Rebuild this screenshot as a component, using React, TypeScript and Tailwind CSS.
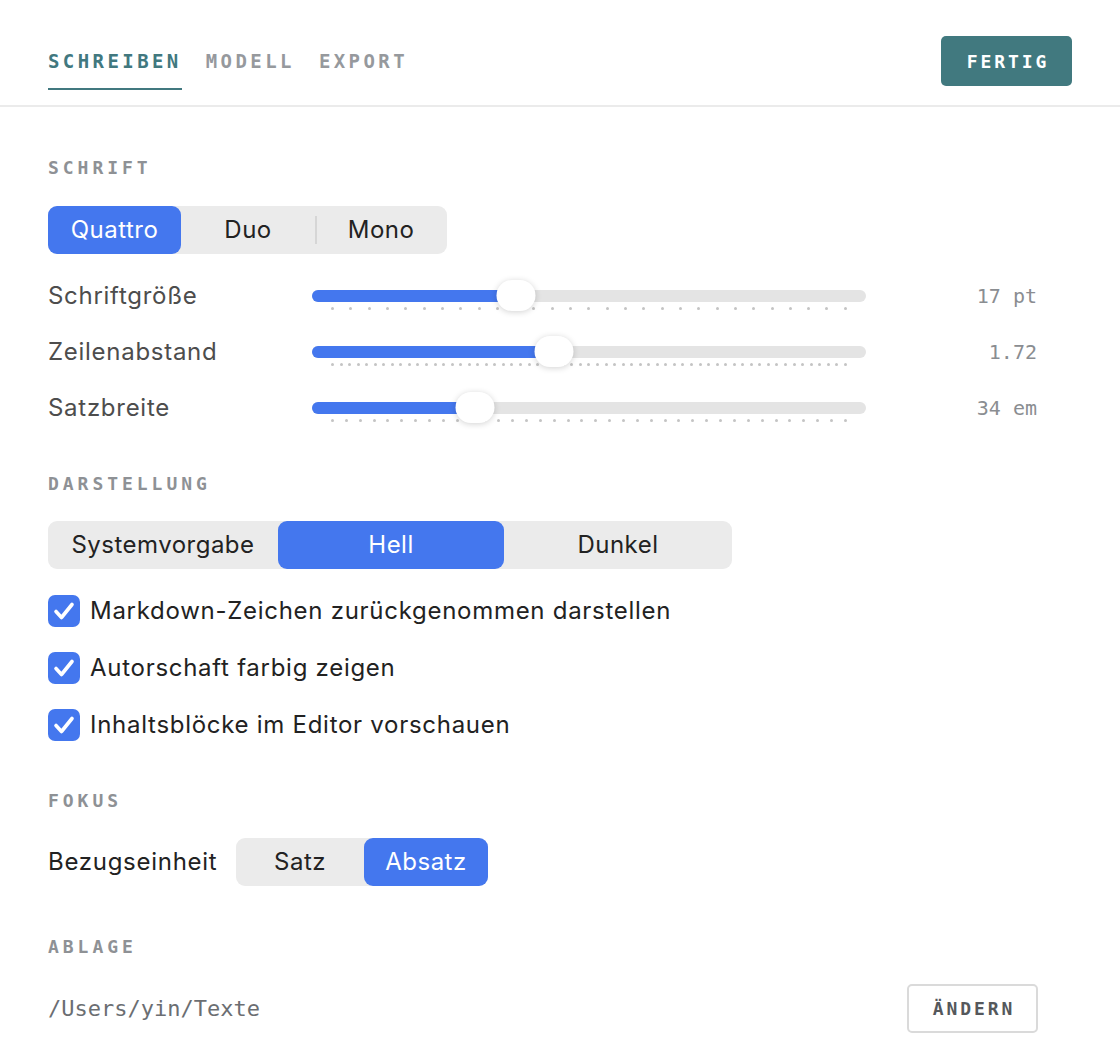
import { useState } from "react";

const mono = "font-['DejaVu_Sans_Mono',monospace]";

function SectionLabel({ children }: { children: string }) {
  return (
    <div className={`${mono} h-[20px] leading-[20px] text-[18px] font-bold tracking-[0.22em] text-[#8e9195]`}>
      {children}
    </div>
  );
}

type SegProps = {
  items: string[];
  active: number;
  widths: number[];
  onPick: (i: number) => void;
};

function Segmented({ items, active, widths, onPick }: SegProps) {
  return (
    <div className="flex h-[48px] rounded-[9px] bg-[#ebebeb]">
      {items.map((label, i) => {
        const on = i === active;
        const showDivider = i > 0 && i !== active && i - 1 !== active;
        return (
          <div key={label} className="relative flex" style={{ width: widths[i] }}>
            {showDivider && (
              <div className="absolute left-0 top-[10px] h-[28px] w-[2px] bg-[#d6d6d6]" />
            )}
            <button
              onClick={() => onPick(i)}
              className={
                on
                  ? "flex-1 rounded-[9px] bg-[#4477ee] text-[24px] tracking-[0.02em] text-white"
                  : "flex-1 rounded-[9px] text-[24px] tracking-[0.02em] text-[#222]"
              }
            >
              {label}
            </button>
          </div>
        );
      })}
    </div>
  );
}

function Slider({
  label,
  value,
  pct,
  dots,
}: {
  label: string;
  value: string;
  pct: number;
  dots: number;
}) {
  return (
    <div className="flex h-[56px] items-center">
      <div className="w-[264px] text-[24px] tracking-[0.03em] text-[#4d4d4d]">{label}</div>
      <div className="w-[554px] pt-[8px]">
        <div className="relative h-[12px] rounded-full bg-[#e4e4e4]">
          <div className="h-full rounded-full bg-[#4477ee]" style={{ width: `${pct}%` }} />
          <div
            className="absolute top-[-10px] z-10 h-[31px] w-[39px] -translate-x-1/2 rounded-full bg-white shadow-[0_1px_6px_rgba(0,0,0,0.18)]"
            style={{ left: `${pct}%` }}
          />
        </div>
        <div className="mt-[5px] flex justify-between px-[19px]">
          {Array.from({ length: dots }).map((_, i) => (
            <span key={i} className="h-[3px] w-[3px] rounded-full bg-[#c4c4c4]" />
          ))}
        </div>
      </div>
      <div className={`${mono} w-[171px] text-right text-[20px] text-[#8a8d91]`}>{value}</div>
    </div>
  );
}

function Check({ label }: { label: string }) {
  return (
    <div className="flex h-[57px] items-center gap-[10px]">
      <span className="flex h-[32px] w-[32px] items-center justify-center rounded-[7px] bg-[#4477ee]">
        <svg width="32" height="32" viewBox="0 0 32 32" fill="none">
          <path
            d="M8 16.5 L13.5 22.5 L24 9.5"
            stroke="white"
            strokeWidth="3.6"
            strokeLinecap="round"
            strokeLinejoin="round"
          />
        </svg>
      </span>
      <span className="text-[24px] tracking-[0.03em] text-[#222]">{label}</span>
    </div>
  );
}

export default function App() {
  const [tab, setTab] = useState(0);
  const [font, setFont] = useState(0);
  const [theme, setTheme] = useState(1);
  const [unit, setUnit] = useState(1);
  const tabs = ["SCHREIBEN", "MODELL", "EXPORT"];

  return (
    <div className="h-[1040px] w-[1120px] bg-white font-['Inter','Liberation_Sans',sans-serif]">
      {/* Kopfzeile */}
      <div className="flex h-[107px] items-start justify-between border-b-2 border-[#ebebeb] px-[48px] pt-[36px]">
        <div className="mt-[14px] flex gap-[24px]">
          {tabs.map((t, i) => (
            <button
              key={t}
              onClick={() => setTab(i)}
              className={
                i === tab
                  ? `${mono} h-[40px] border-b-2 border-[#41787f] pb-[16px] text-left text-[19px] font-bold leading-[22px] tracking-[0.18em] text-[#41787f]`
                  : `${mono} h-[40px] border-b-2 border-transparent pb-[16px] text-left text-[19px] font-bold leading-[22px] tracking-[0.18em] text-[#96999d]`
              }
            >
              {t}
            </button>
          ))}
        </div>
        <button
          className={`${mono} h-[50px] w-[131px] rounded-[5px] bg-[#41797f] pl-[3px] text-[18px] font-bold tracking-[0.16em] text-white`}
        >
          FERTIG
        </button>
      </div>

      <div className="px-[48px] pt-[51px]">
        {/* Schrift */}
        <SectionLabel>SCHRIFT</SectionLabel>
        <div className="mt-[28px] w-[399px]">
          <Segmented items={["Quattro", "Duo", "Mono"]} widths={[133, 134, 132]} active={font} onPick={setFont} />
        </div>
        <div className="mt-[14px]">
          <Slider label="Schriftgröße" value="17 pt" pct={36.8} dots={29} />
          <Slider label="Zeilenabstand" value="1.72" pct={43.7} dots={61} />
          <Slider label="Satzbreite" value="34 em" pct={29.4} dots={38} />
        </div>

        {/* Darstellung */}
        <div className="mt-[38px]">
          <SectionLabel>DARSTELLUNG</SectionLabel>
        </div>
        <div className="mt-[27px] w-[684px]">
          <Segmented
            items={["Systemvorgabe", "Hell", "Dunkel"]}
            widths={[230, 226, 228]}
            active={theme}
            onPick={setTheme}
          />
        </div>
        <div className="mt-[13px]">
          <Check label="Markdown-Zeichen zurückgenommen darstellen" />
          <Check label="Autorschaft farbig zeigen" />
          <Check label="Inhaltsblöcke im Editor vorschauen" />
        </div>

        {/* Fokus */}
        <div className="mt-[38px]">
          <SectionLabel>FOKUS</SectionLabel>
        </div>
        <div className="mt-[27px] flex items-center">
          <span className="w-[188px] text-[24px] tracking-[0.03em] text-[#222]">Bezugseinheit</span>
          <div className="w-[252px]">
            <Segmented items={["Satz", "Absatz"]} widths={[128, 124]} active={unit} onPick={setUnit} />
          </div>
        </div>

        {/* Ablage */}
        <div className="mt-[51px]">
          <SectionLabel>ABLAGE</SectionLabel>
        </div>
        <div className="mt-[27px] flex items-center justify-between pr-[34px]">
          <span className={`${mono} text-[22px] text-[#6b6e72]`}>/Users/yin/Texte</span>
          <button
            className={`${mono} h-[49px] w-[131px] rounded-[5px] border-2 border-[#dadada] pl-[3px] text-[18px] font-bold tracking-[0.16em] text-[#55585c]`}
          >
            ÄNDERN
          </button>
        </div>
      </div>
    </div>
  );
}
